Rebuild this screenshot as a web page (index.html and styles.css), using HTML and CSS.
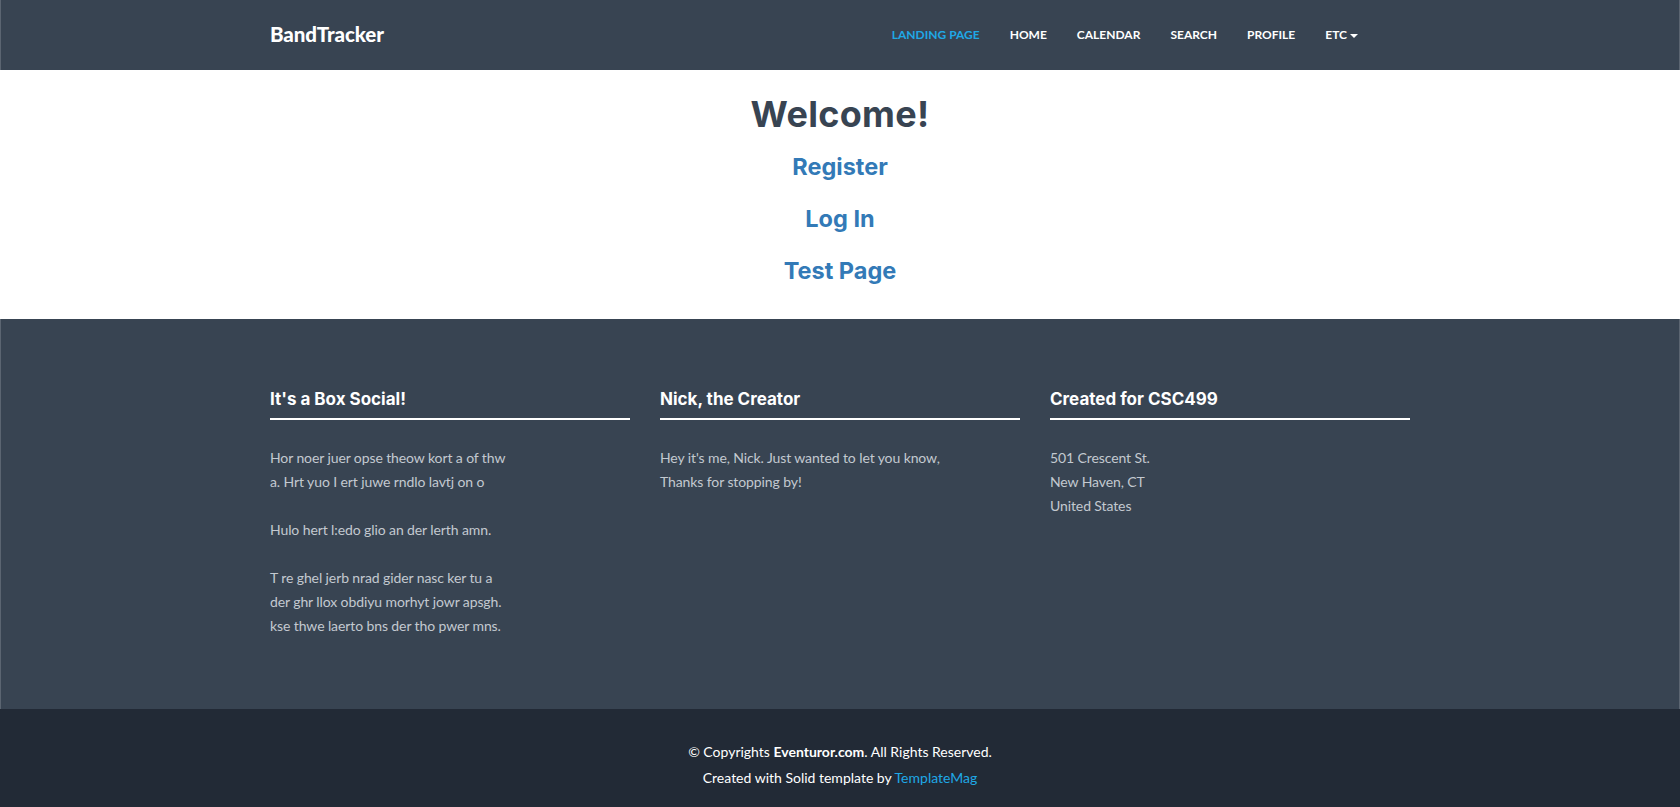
FILE: index.html
```html
<!DOCTYPE html>
<html lang="en">
<head>
<meta charset="utf-8">
<title>BandTracker</title>
<link rel="stylesheet" href="styles.css">
</head>
<body>
<header class="navbar">
  <div class="container nav-inner">
    <a class="brand" href="#">BandTracker</a>
    <ul class="nav-links">
      <li><a class="active" href="#">LANDING PAGE</a></li>
      <li><a href="#">HOME</a></li>
      <li><a href="#">CALENDAR</a></li>
      <li><a href="#">SEARCH</a></li>
      <li><a href="#">PROFILE</a></li>
      <li><a href="#">ETC<span class="caret"></span></a></li>
    </ul>
  </div>
</header>

<main class="welcome">
  <h1 class="welcome-title">Welcome!</h1>
  <div class="welcome-links">
    <a href="#">Register</a>
    <a href="#">Log In</a>
    <a href="#">Test Page</a>
  </div>
</main>

<footer class="footerwrap">
  <div class="container footer-cols">
    <div class="col">
      <h4>It's a Box Social!</h4>
      <p>Hor noer juer opse theow kort a of thw<br>a. Hrt yuo I ert juwe rndlo lavtj on o<br><br>Hulo hert l:edo glio an der lerth amn.<br><br>T re ghel jerb nrad gider nasc ker tu a<br>der ghr llox obdiyu morhyt jowr apsgh.<br>kse thwe laerto bns der tho pwer mns.</p>
    </div>
    <div class="col">
      <h4>Nick, the Creator</h4>
      <p>Hey it's me, Nick. Just wanted to let you know,<br>Thanks for stopping by!</p>
    </div>
    <div class="col">
      <h4>Created for CSC499</h4>
      <p>501 Crescent St.<br>New Haven, CT<br>United States</p>
    </div>
  </div>
</footer>

<div class="copyrights">
  <p>© Copyrights <b>Eventuror.com</b>. All Rights Reserved.</p>
  <p>Created with Solid template by <a href="#">TemplateMag</a></p>
</div>
</body>
</html>
```

FILE: styles.css
```css
* { box-sizing: border-box; }

body {
  margin: 0;
  font-family: "Lato", "Liberation Sans", sans-serif;
  font-size: 14px;
  background: #ffffff;
}

a { text-decoration: none; }

.container {
  width: 1170px;
  margin: 0 auto;
  padding: 0 15px;
}

/* NAVBAR */
.navbar {
  height: 70px;
  background: #384452;
  border-left: 1px solid #5b6571;
  border-right: 1px solid #5b6571;
}

.nav-inner {
  height: 70px;
  display: flex;
  align-items: center;
  justify-content: space-between;
}

.brand {
  color: #ffffff;
  font-family: "Lato", sans-serif;
  font-weight: 900;
  font-size: 20.5px;
  letter-spacing: -0.1px;
  padding-bottom: 2px;
}

.nav-links {
  list-style: none;
  margin: 0 52px 0 0;
  padding: 0;
  display: flex;
}

.nav-links a {
  display: block;
  padding: 0 15px;
  color: #ffffff;
  font-weight: 700;
  font-size: 12px;
  line-height: 20px;
}

.nav-links li:last-child a { padding-right: 0; }

.nav-links a.active { color: #1fa8e6; }

.caret {
  display: inline-block;
  width: 0;
  height: 0;
  margin-left: 3px;
  vertical-align: middle;
  border-top: 4px solid #ffffff;
  border-left: 4px solid transparent;
  border-right: 4px solid transparent;
}

/* WELCOME */
.welcome {
  padding: 18px 0 22px;
  text-align: center;
}

.welcome-title {
  margin: 0;
  font-family: "Inter", "Open Sans", sans-serif;
  font-weight: 700;
  font-size: 36px;
  line-height: 52px;
  color: #384452;
  letter-spacing: 0.3px;
}

.welcome-links {
  margin-top: 1px;
  display: flex;
  flex-direction: column;
  align-items: center;
}

.welcome-links a {
  font-family: "Inter", "Open Sans", sans-serif;
  font-weight: 700;
  font-size: 23.5px;
  line-height: 52px;
  color: #337ab7;
}

/* FOOTER */
.footerwrap {
  background: #384452;
  border-left: 1px solid #5b6571;
  border-right: 1px solid #5b6571;
  padding: 69px 0 71px;
}

.footer-cols {
  display: grid;
  grid-template-columns: repeat(3, 360px);
  column-gap: 30px;
}

.col h4 {
  margin: 0;
  padding-bottom: 8px;
  border-bottom: 2px solid #ffffff;
  font-family: "Inter", "Open Sans", sans-serif;
  font-weight: 700;
  font-size: 17px;
  line-height: 22px;
  color: #ffffff;
}

.col p {
  margin: 26px 0 0;
  font-size: 14px;
  line-height: 24px;
  color: #c3c9d0;
  letter-spacing: -0.1px;
}

/* COPYRIGHTS */
.copyrights {
  background: #222a36;
  padding: 30px 0 16px;
  text-align: center;
  color: #ffffff;
}

.copyrights p {
  margin: 0;
  font-size: 14px;
  line-height: 26px;
}

.copyrights b { font-weight: 700; }

.copyrights a { color: #1fa8e6; }
```
